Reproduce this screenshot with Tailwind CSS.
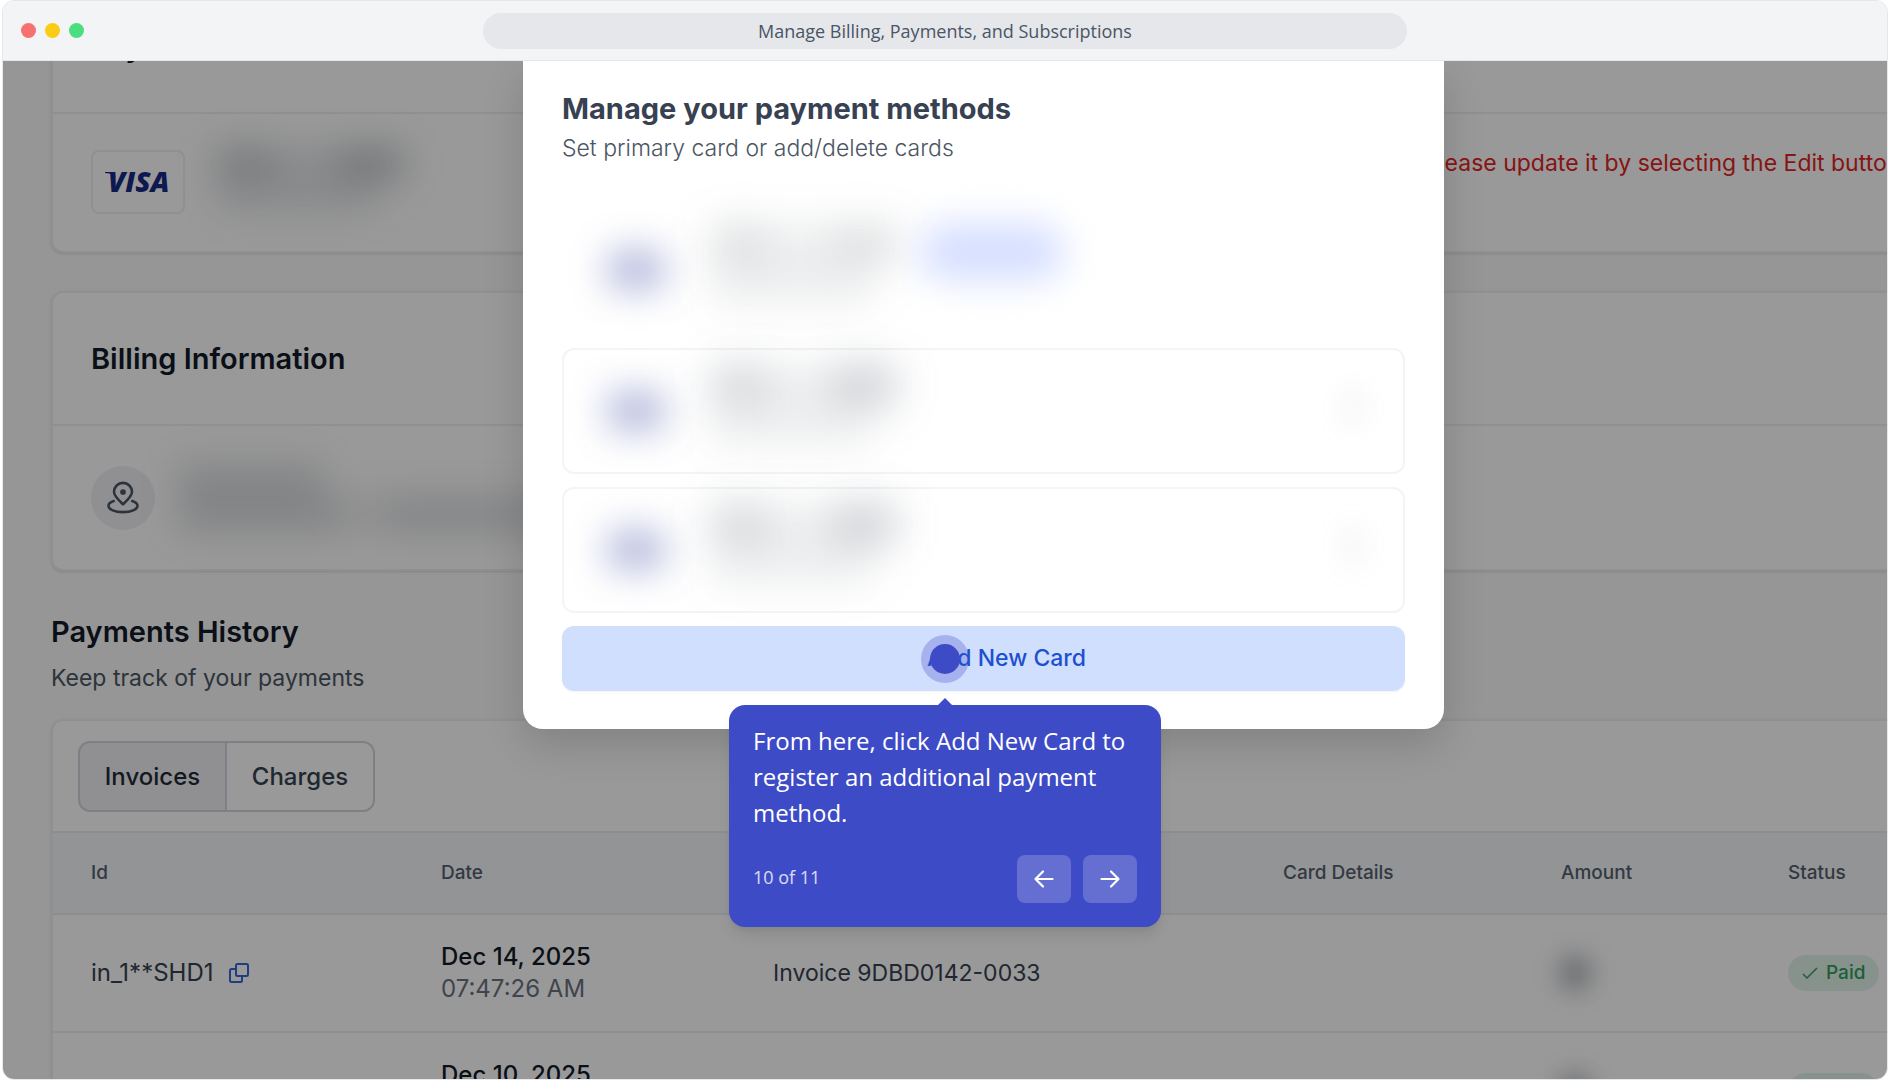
<!DOCTYPE html>
<html lang="en">

<head>
    <meta charset="UTF-8">
    <meta name="viewport" content="width=device-width, initial-scale=1.0">
    <title>Manage Billing, Payments, and Subscriptions</title>
    <script src="https://cdn.jsdelivr.net/npm/@tailwindcss/browser@4"></script>
</head>

<body class="bg-white font-['Inter',sans-serif]">
    <div class="relative mx-[2px] flex h-screen flex-col overflow-hidden rounded-xl border border-gray-200">
        <!-- Window bar -->
        <header class="relative z-10 flex h-[60px] shrink-0 items-center border-b border-gray-200 bg-gray-100 px-[18px] font-['Open_Sans',sans-serif]">
            <div class="flex flex-1 gap-[9px]">
                <span class="size-[15px] rounded-full bg-[#f87171]"></span>
                <span class="size-[15px] rounded-full bg-[#facc15]"></span>
                <span class="size-[15px] rounded-full bg-[#4ade80]"></span>
            </div>
            <h1 class="h-9 w-1/2 rounded-full bg-gray-200 text-center text-lg leading-9 text-gray-600">Manage Billing, Payments, and Subscriptions</h1>
            <div class="flex-1"></div>
        </header>

        <main class="relative flex-1 overflow-hidden bg-[#fafafa] pl-12">
            <!-- Payment method -->
            <section class="-mt-[82px] -mr-[60px] rounded-xl border-2 border-[#f0f0f2] bg-white shadow">
                <h2 class="flex h-[133px] items-center border-b-2 border-[#f0f0f2] px-[38px] text-[29px] font-semibold text-[#111928]">Payment Method</h2>
                <div class="flex h-[137px] items-center px-[38px]">
                    <div class="mb-[2px] flex h-16 w-[94px] items-center justify-center rounded-lg border-2 border-[#f0f0f2]">
                        <svg class="h-8 w-[74px]" viewBox="0 0 74 32">
                            <path d="M4 6h8l3 5-3-2q-3-2-8-2z" fill="#172b85" />
                            <text x="7" y="26" font-family="Open Sans" font-size="28" font-weight="800" font-style="italic" fill="#172b85">VISA</text>
                        </svg>
                    </div>
                    <div class="ml-8 w-[186px] blur-[18px]">
                        <div class="-mt-2 flex h-8 justify-between">
                            <span class="w-14 bg-[#4b5563]/30"></span>
                            <span class="flex-1 bg-[#4b5563]/15"></span>
                            <span class="w-16 bg-[#4b5563]/35"></span>
                        </div>
                        <div class="h-8 w-40 bg-[#4b5563]/15"></div>
                    </div>
                    <p class="mb-10 ml-auto text-[23px] leading-8 whitespace-nowrap text-[#e02424]">Your card has expired. Please update it by selecting the Edit button.</p>
                </div>
            </section>

            <!-- Billing information -->
            <section class="mt-[38px] -mr-[60px] rounded-xl border-2 border-[#f0f0f2] bg-white shadow">
                <h2 class="flex h-[133px] items-center border-b-2 border-[#f0f0f2] px-[38px] text-[29px] font-semibold text-[#111928]">Billing Information</h2>
                <div class="flex h-[143px] items-center px-[38px]">
                    <div class="flex size-16 items-center justify-center rounded-full bg-[#f0f0f4]">
                        <svg class="size-9" viewBox="0 0 24 24" fill="none" stroke="#4b5563" stroke-width="1.7" stroke-linecap="round" stroke-linejoin="round">
                            <path d="M12 16.2C14.6 13.7 18 11 18 7.9a6 6 0 0 0-12 0c0 3.1 3.4 5.8 6 8.3Z" />
                            <circle cx="12" cy="8" r="1.4" fill="#4b5563" stroke-width="1" />
                            <path d="M5.8 14C3.7 14.7 2.3 15.8 2.3 17.2c0 2.5 4.3 4.2 9.7 4.2s9.7-1.7 9.7-4.2c0-1.400-1.400-2.500-3.500-3.200" />
                        </svg>
                    </div>
                    <div class="ml-6 w-[480px] blur-[18px]">
                        <div class="h-8 w-36 bg-[#4b5563]/20"></div>
                        <div class="flex h-9">
                            <span class="w-40 bg-[#4b5563]/20"></span>
                            <span class="w-12 bg-[#4b5563]/10"></span>
                            <span class="flex-1 bg-[#4b5563]/20"></span>
                        </div>
                    </div>
                </div>
            </section>

            <!-- Payments history -->
            <h2 class="mt-[41px] text-[29px] leading-10 font-semibold text-[#111928]">Payments History</h2>
            <p class="mt-[10px] text-[23px] leading-8 text-[#4b5563]">Keep track of your payments</p>

            <section class="mt-[25px] -mr-[60px] rounded-t-xl border-2 border-[#f0f0f2] bg-white shadow">
                <div class="flex px-[25px] pt-5 pb-[19px]">
                    <button type="button" class="h-[71px] w-[149px] rounded-l-xl border-2 border-gray-300 bg-[#f0f0f4] text-2xl font-medium text-[#1f2a37]">Invoices</button>
                    <button type="button" class="-ml-[2px] h-[71px] w-[150px] rounded-r-xl border-2 border-gray-300 text-2xl font-medium text-[#374151]">Charges</button>
                </div>
                <table class="w-full table-fixed text-left">
                    <thead class="h-[82px] border-y-2 border-[#e9ebef] bg-[#f6f7f9] text-[19px] text-[#565f70]">
                        <tr>
                            <th class="w-[350px] pl-[38px] font-medium">Id</th>
                            <th class="w-[332px] pl-[38px] font-medium">Date</th>
                            <th class="w-[510px] pl-[38px] font-medium">Description</th>
                            <th class="w-[278px] pl-[38px] font-medium">Card Details</th>
                            <th class="w-[227px] pl-[38px] font-medium">Amount</th>
                            <th class="pl-[38px] font-medium">Status</th>
                        </tr>
                    </thead>
                    <tbody class="text-[23px] text-[#374151]">
                        <tr class="h-[118px] border-b-2 border-[#f0f0f2]">
                            <td class="pl-[38px] text-2xl">
                                <div class="flex items-center gap-4">in_1**SHD1
                                    <button type="button" aria-label="Copy id">
                                        <svg class="size-5" viewBox="0 0 20 20" fill="none" stroke="#3468d8" stroke-width="2" stroke-linejoin="round">
                                            <rect x="7" y="1" width="12" height="12" rx="1.5" />
                                            <path d="M7 6H2.5A1.5 1.5 0 0 0 1 7.5v10A1.5 1.5 0 0 0 2.5 19h9a1.5 1.5 0 0 0 1.5-1.5V13" />
                                        </svg>
                                    </button>
                                </div>
                            </td>
                            <td class="pl-[38px] text-2xl leading-8">
                                <div class="font-medium text-[#111928]">Dec 14, 2025</div>
                                <div class="text-[#6b7280]">07:47:26 AM</div>
                            </td>
                            <td class="pl-[38px]">Invoice 9DBD0142-0033</td>
                            <td></td>
                            <td class="pl-[38px]"><div class="h-8 w-7 bg-[#374151]/40 blur-[12px]"></div></td>
                            <td class="pl-[38px]">
                                <span class="inline-flex h-9 items-center gap-2 rounded-full bg-[#e3f3ea] px-[14px] text-[19px] font-medium text-[#2f9e5f]">
                                    <svg class="size-4" viewBox="0 0 16 16" fill="none" stroke="currentColor" stroke-width="1.5"><path d="M1 9l4 4L15 3" /></svg>Paid
                                </span>
                            </td>
                        </tr>
                        <tr class="h-[118px] border-b-2 border-[#f0f0f2]">
                            <td class="pl-[38px] text-2xl">in_1**RKF2</td>
                            <td class="pl-[38px] text-2xl leading-8">
                                <div class="font-medium text-[#111928]">Dec 10, 2025</div>
                                <div class="text-[#6b7280]">07:47:26 AM</div>
                            </td>
                            <td></td>
                            <td></td>
                            <td class="pl-[38px]"><div class="h-8 w-7 bg-[#374151]/40 blur-[12px]"></div></td>
                            <td class="pl-[38px]">
                                <span class="inline-flex h-9 items-center gap-2 rounded-full bg-[#e3f3ea] px-[14px] text-[19px] font-medium text-[#2f9e5f]">
                                    <svg class="size-4" viewBox="0 0 16 16" fill="none" stroke="currentColor" stroke-width="1.5"><path d="M1 9l4 4L15 3" /></svg>Paid
                                </span>
                            </td>
                        </tr>
                    </tbody>
                </table>
            </section>

            <!-- Modal -->
            <div class="absolute inset-0 flex items-start justify-center bg-black/40 pl-[77px]">
                <div role="dialog" aria-labelledby="modal-title" class="w-full max-w-[921px] rounded-b-[20px] bg-white px-[39px] pt-[30px] pb-[38px] shadow-[0_16px_40px_rgba(0,0,0,0.15)]">
                    <h2 id="modal-title" class="text-[29px] leading-9 font-bold text-[#374151]">Manage your payment methods</h2>
                    <p class="mt-[5px] text-[23px] leading-8 font-light text-[#4b5563]">Set primary card or add/delete cards</p>
                    <div class="mt-[45px] flex flex-col gap-[13px]">
                        <div class="flex h-[126px] items-center px-[46px]">
                            <div class="-mt-1 h-10 w-14 bg-[#2b3a9b]/35 blur-[18px]"></div>
                            <div class="ml-12 w-[184px] blur-[20px]">
                                <div class="-mt-4 flex h-10 bg-[#4b5563]/10">
                                    <span class="w-14 bg-[#4b5563]/10"></span>
                                    <span class="ml-auto w-16 bg-[#4b5563]/10"></span>
                                </div>
                                <div class="h-10 w-40 bg-[#4b5563]/10"></div>
                            </div>
                            <div class="mb-10 ml-6 h-14 w-36 rounded-full bg-[#d5deff] blur-[18px]"></div>
                        </div>
                        <div class="flex h-[126px] items-center rounded-xl border-2 border-gray-100 px-11">
                            <div class="h-10 w-14 bg-[#2b3a9b]/35 blur-[18px]"></div>
                            <div class="ml-12 w-[184px] blur-[20px]">
                                <div class="-mt-3 flex h-10 bg-[#4b5563]/10">
                                    <span class="w-14 bg-[#4b5563]/15"></span>
                                    <span class="ml-auto w-16 bg-[#4b5563]/20"></span>
                                </div>
                                <div class="h-10 w-40 bg-[#4b5563]/10"></div>
                            </div>
                            <div class="mb-2 ml-auto h-9 w-3 bg-gray-400/20 blur-[14px]"></div>
                        </div>
                        <div class="flex h-[126px] items-center rounded-xl border-2 border-gray-100 px-11">
                            <div class="h-10 w-14 bg-[#2b3a9b]/35 blur-[18px]"></div>
                            <div class="ml-12 w-[184px] blur-[20px]">
                                <div class="-mt-3 flex h-10 bg-[#4b5563]/10">
                                    <span class="w-14 bg-[#4b5563]/15"></span>
                                    <span class="ml-auto w-16 bg-[#4b5563]/20"></span>
                                </div>
                                <div class="h-10 w-40 bg-[#4b5563]/10"></div>
                            </div>
                            <div class="mb-2 ml-auto h-9 w-3 bg-gray-400/20 blur-[14px]"></div>
                        </div>
                        <button type="button" class="h-[65px] rounded-xl bg-[#d1dfff] pl-[46px] text-[23px] font-medium text-[#1d50cf] shadow-xs">Add New Card</button>
                    </div>
                </div>
            </div>

            <!-- Guide step -->
            <div class="absolute top-[574px] left-1/2 flex w-[432px] -translate-x-1/2 flex-col items-center font-['Open_Sans',sans-serif]">
                <div class="flex size-12 items-center justify-center rounded-full bg-[#3e4bc6]/30">
                    <span class="size-[30px] rounded-full bg-[#3e4bc6]"></span>
                </div>
                <svg class="mt-[15px] h-[7px] w-[14px]" viewBox="0 0 14 7" fill="#3e4bc6"><path d="M0 7L7 0l7 7z" /></svg>
                <div class="w-full rounded-2xl bg-[#3e4bc6] p-6 pt-[18px] text-white shadow-lg">
                    <p class="text-2xl leading-9">From here, click Add New Card to register an additional payment method.</p>
                    <div class="mt-6 flex items-center gap-3">
                        <span class="mr-auto mb-1 text-lg leading-7 text-white/80">10 of 11</span>
                        <button type="button" aria-label="Previous" class="flex h-12 w-[54px] items-center justify-center rounded-lg bg-white/20">
                            <svg class="size-6" viewBox="0 0 24 24" fill="none" stroke="currentColor" stroke-width="2.2" stroke-linecap="round" stroke-linejoin="round"><path d="M20.500 12H4M11 4.500L3.500 12l7.500 7.500" /></svg>
                        </button>
                        <button type="button" aria-label="Next" class="flex h-12 w-[54px] items-center justify-center rounded-lg bg-white/20">
                            <svg class="size-6" viewBox="0 0 24 24" fill="none" stroke="currentColor" stroke-width="2.2" stroke-linecap="round" stroke-linejoin="round"><path d="M3.500 12H20M13 4.500l7.500 7.500-7.500 7.500" /></svg>
                        </button>
                    </div>
                </div>
            </div>
        </main>
    </div>
</body>

</html>
